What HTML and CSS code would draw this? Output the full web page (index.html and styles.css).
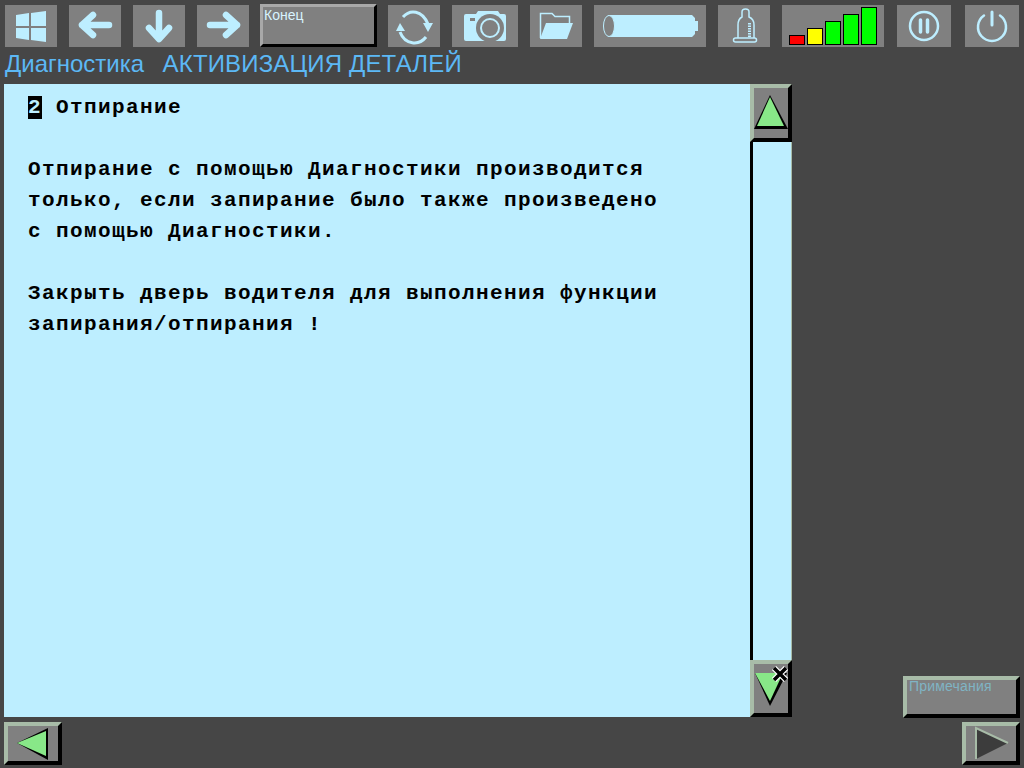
FILE: index.html
```html
<!DOCTYPE html>
<html lang="ru">
<head>
    <meta charset="UTF-8">
    <title>Диагностика</title>
    <link rel="stylesheet" href="styles.css">
</head>
<body>
    <div class="toolbar">
        <div class="tool w52">
            <svg width="52" height="42" viewBox="0 0 52 42"><path class="fill" d="M11 10 24 8V21H11ZM26 8 41 6V21H26ZM11 23H24V35L11 33ZM26 23H41V37L26 35Z"/></svg>
        </div>
        <div class="tool w52">
            <svg width="52" height="42" viewBox="0 0 52 42"><path class="line" d="M13 20H40M24 10 13 20 24 30"/></svg>
        </div>
        <div class="tool w52">
            <svg width="52" height="42" viewBox="0 0 52 42"><path class="line" d="M26 8V33M16 23 26 34 36 23"/></svg>
        </div>
        <div class="tool w52">
            <svg width="52" height="42" viewBox="0 0 52 42"><path class="line" d="M13 20H40M29 10 40 20 29 30"/></svg>
        </div>
        <div class="bevel-btn end-btn">Конец</div>
        <div class="tool w52">
            <svg width="52" height="42" viewBox="0 0 52 42">
                <path class="thin" d="M15 12C22 4 34 5 40 19M12 27C17 40 31 41 38 32"/>
                <path class="fill" d="M35 18H45L40 27ZM8 26H17L12 18Z"/>
            </svg>
        </div>
        <div class="tool w66">
            <svg width="66" height="42" viewBox="0 0 66 42">
                <path class="fill" d="M14 9H24L26 6H46L48 9H52Q54 9 54 11V34Q54 36 52 36H14Q12 36 12 34V11Q12 9 14 9Z"/>
                <circle cx="38" cy="23" r="14" fill="#808080"/>
                <circle cx="38" cy="23" r="9" fill="none" stroke="#bdeeff" stroke-width="2"/>
                <rect x="18" y="13" width="5" height="3" fill="#808080"/>
            </svg>
        </div>
        <div class="tool w52">
            <svg width="52" height="42" viewBox="0 0 52 42">
                <path d="M10.500 33V8.500H22L25 11.500H39.500V18" fill="none" stroke="#bdeeff" stroke-width="1.500"/>
                <path class="fill" d="M16 18H43L37 34H10Z"/>
            </svg>
        </div>
        <div class="tool w112">
            <svg width="112" height="42" viewBox="0 0 112 42">
                <path class="fill" d="M14 10H98L101 13V16H104V26H101V29L98 32H14Z"/>
                <ellipse cx="15" cy="21" rx="5.500" ry="10.500" fill="#808080" stroke="#bdeeff"/>
            </svg>
        </div>
        <div class="tool w52">
            <svg width="52" height="42" viewBox="0 0 52 42">
                <path d="M20 33V20Q20 14 24 12V7Q24 4 27.500 4 31 4 31 7V12Q36 14 36 20V33" fill="none" stroke="#bdeeff" stroke-width="1.500"/>
                <rect x="15.500" y="33" width="23" height="4" rx="2" fill="none" stroke="#bdeeff" stroke-width="1.500"/>
                <path d="M31.500 18V32" stroke="#bdeeff" stroke-width="3" stroke-dasharray="1.500 1"/>
            </svg>
        </div>
        <div class="tool signal">
            <span class="bar red"></span>
            <span class="bar yellow"></span>
            <span class="bar green b3"></span>
            <span class="bar green b4"></span>
            <span class="bar green b5"></span>
        </div>
        <div class="tool w54 after-signal">
            <svg width="54" height="42" viewBox="0 0 54 42">
                <circle cx="27" cy="21" r="14" fill="none" stroke="#bdeeff" stroke-width="2.500"/>
                <path d="M23.500 15V27M30.500 15V27" stroke="#bdeeff" stroke-width="3.500" stroke-linecap="round"/>
            </svg>
        </div>
        <div class="tool w54 after-pause">
            <svg width="54" height="42" viewBox="0 0 54 42">
                <path d="M19 10.500A14 14 0 1 0 35 10.500" fill="none" stroke="#bdeeff" stroke-width="2.500" stroke-linecap="round"/>
                <path d="M27 7V20" stroke="#bdeeff" stroke-width="3" stroke-linecap="round"/>
            </svg>
        </div>
    </div>

    <div class="title-row">
        <span class="title-main">Диагностика</span>
        <span class="title-sub">АКТИВИЗАЦИЯ ДЕТАЛЕЙ</span>
    </div>

    <div class="content">
        <div class="doc">
            <p class="doc-text doc-head"><span class="cursor">2</span><span class="head-text">Отпирание</span></p>
            <p class="doc-text">Отпирание с помощью Диагностики производится<br>только, если запирание было также произведено<br>с помощью Диагностики.</p>
            <p class="doc-text">Закрыть дверь водителя для выполнения функции<br>запирания/отпирания !</p>
        </div>
        <div class="scrollbar">
            <div class="bevel-btn scroll-btn">
                <svg width="34" height="50" viewBox="0 0 34 50"><path d="M16 7 34 41H0Z" fill="#000"/><path d="M16 9 30 38H3Z" fill="#88e888"/></svg>
            </div>
            <div class="track"></div>
            <div class="bevel-btn scroll-btn down">
                <svg width="34" height="49" viewBox="0 0 34 49"><path d="M1 9H33L16 42Z" fill="#000"/><path d="M1 9H29L16 37Z" fill="#88e888"/></svg>
            </div>
            <svg class="pointer" width="18" height="18" viewBox="0 0 18 18">
                <path d="M3 3 15 15M15 3 3 15" stroke="#fff" stroke-width="6"/>
                <path d="M3 3 15 15M15 3 3 15" stroke="#000" stroke-width="3.500"/>
            </svg>
        </div>
        <div class="side">
            <div class="bevel-btn note-btn">Примечания</div>
        </div>
    </div>

    <div class="footer">
        <div class="bevel-btn nav-btn">
            <svg width="50" height="35" viewBox="0 0 50 35"><path d="M9 17 40 2V34Z" fill="#000"/><path d="M9 17 38 5V30Z" fill="#88e888"/></svg>
        </div>
        <div class="bevel-btn nav-btn">
            <svg width="50" height="35" viewBox="0 0 50 35">
                <path d="M10 2 42 17 10 33Z" fill="#3c3c3c"/>
                <path d="M10 33V2L42 17" fill="none" stroke="#a8bca8" stroke-width="2"/>
            </svg>
        </div>
    </div>
</body>
</html>
```

FILE: styles.css
```css
html, body {
    margin: 0;
    padding: 0;
}

body {
    width: 1024px;
    height: 768px;
    overflow: hidden;
    background-color: #464646;
    display: flex;
    flex-direction: column;
    font-family: 'Liberation Sans', sans-serif;
}

.toolbar {
    display: flex;
    gap: 12px;
    height: 43px;
    padding: 4px 0 0 5px;
    align-items: flex-start;
}

.tool {
    height: 42px;
    margin-top: 1px;
    background-color: #808080;
    display: flex;
    justify-content: center;
    align-items: center;
}

.tool svg {
    display: block;
}

.w52 {
    width: 52px;
}

.w54 {
    width: 54px;
}

.w66 {
    width: 66px;
}

.w112 {
    width: 112px;
}

.after-signal {
    margin-left: 1px;
}

.after-pause {
    margin-left: 2px;
}

.fill {
    fill: #bdeeff;
}

.line {
    fill: none;
    stroke: #bdeeff;
    stroke-width: 6.500;
    stroke-linecap: round;
    stroke-linejoin: round;
}

.thin {
    fill: none;
    stroke: #bdeeff;
    stroke-width: 3;
}

.bevel-btn {
    box-sizing: border-box;
    background-color: #808080;
    border-style: solid;
    border-width: 4px;
    border-color: #a8bca8 #000 #000 #a8bca8;
}

.end-btn {
    width: 117px;
    height: 43px;
    margin-left: -1px;
    margin-right: -1px;
    border-width: 3px;
    border-color: #a8a8a8 #000 #000 #a8a8a8;
    color: #d8f4ff;
    font-size: 14px;
    line-height: 16px;
    padding-left: 1px;
}

.signal {
    width: 102px;
    box-sizing: border-box;
    padding: 0 7px 2px;
    gap: 2px;
    align-items: flex-end;
    justify-content: flex-start;
}

.bar {
    box-sizing: border-box;
    width: 16px;
    border: 1px solid #000;
}

.red {
    height: 10px;
    background-color: #ff0000;
}

.yellow {
    height: 17px;
    background-color: #ffff00;
}

.green {
    background-color: #00ff00;
}

.b3 {
    height: 24px;
}

.b4 {
    height: 31px;
}

.b5 {
    height: 38px;
}

.title-row {
    height: 37px;
    box-sizing: border-box;
    padding: 3px 0 0 5px;
    color: #5cb8f5;
    line-height: 28px;
    white-space: nowrap;
}

.title-main {
    font-size: 24px;
}

.title-sub {
    font-size: 24px;
    letter-spacing: 0.15px;
    margin-left: 14px;
}

.content {
    display: flex;
    height: 633px;
    padding-left: 4px;
}

.doc {
    width: 746px;
    background-color: #bdeeff;
    box-sizing: border-box;
    padding: 8px 0 0 24px;
}

.doc-text {
    margin: 0 0 31px;
    font-family: 'Liberation Mono', monospace;
    font-size: 21px;
    font-weight: bold;
    letter-spacing: 1.400px;
    line-height: 31px;
    color: #000;
    white-space: nowrap;
}

.doc-head {
    display: flex;
    align-items: center;
}

.cursor {
    width: 14px;
    height: 23px;
    line-height: 23px;
    background-color: #000;
    color: #bdeeff;
}

.head-text {
    margin-left: 14px;
}

.scrollbar {
    position: relative;
    width: 42px;
    display: flex;
    flex-direction: column;
}

.scroll-btn {
    height: 58px;
}

.scroll-btn.down {
    height: 57px;
}

.scroll-btn svg {
    display: block;
}

.track {
    flex: 1;
    background-color: #bdeeff;
    box-sizing: border-box;
    border-left: 3px solid #000;
    border-right: 1px solid #a8bca8;
}

.pointer {
    position: absolute;
    right: 3px;
    bottom: 34px;
}

.side {
    flex: 1;
    display: flex;
    justify-content: flex-end;
    align-items: flex-end;
    padding-right: 4px;
}

.note-btn {
    width: 117px;
    height: 42px;
    margin-bottom: -1px;
    color: #7fb4c4;
    font-size: 14px;
    letter-spacing: 0.2px;
    line-height: 13px;
    padding-left: 2px;
}

.footer {
    display: flex;
    justify-content: space-between;
    padding: 5px 4px 0;
}

.nav-btn {
    width: 58px;
    height: 43px;
}

.nav-btn svg {
    display: block;
}
```
